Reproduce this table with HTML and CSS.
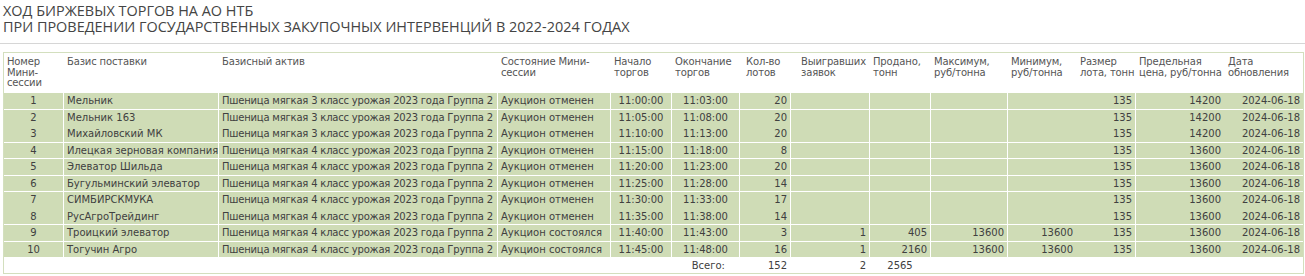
FILE: index.html
```html
<!DOCTYPE html>
<html lang="ru">
<head>
<meta charset="utf-8">
<title>Ход биржевых торгов</title>
<link rel="stylesheet" href="styles.css">
</head>
<body>
<h1 class="title">ХОД БИРЖЕВЫХ ТОРГОВ НА АО НТБ<br>ПРИ ПРОВЕДЕНИИ ГОСУДАРСТВЕННЫХ ЗАКУПОЧНЫХ ИНТЕРВЕНЦИЙ В 2022-2024 ГОДАХ</h1>
<div class="rule"></div>
<div class="panel">
<table class="grid">
<colgroup>
<col class="c1"><col class="c2"><col class="c3"><col class="c4"><col class="c5"><col class="c6"><col class="c7"><col class="c8"><col class="c9"><col class="c10"><col class="c11"><col class="c12"><col class="c13"><col class="c14">
</colgroup>
<thead>
<tr>
<th>Номер<br>Мини-<br>сессии</th>
<th>Базис поставки</th>
<th>Базисный актив</th>
<th>Состояние Мини-<br>сессии</th>
<th>Начало<br>торгов</th>
<th>Окончание<br>торгов</th>
<th class="h-lots">Кол-во<br>лотов</th>
<th class="h-win">Выигравших<br>заявок</th>
<th>Продано,<br>тонн</th>
<th>Максимум,<br>руб/тонна</th>
<th>Минимум,<br>руб/тонна</th>
<th>Размер<br>лота, тонн</th>
<th>Предельная<br>цена, руб/тонна</th>
<th>Дата<br>обновления</th>
</tr>
</thead>
<tbody>
<tr><td class="ctr">1</td><td>Мельник</td><td class="asset">Пшеница мягкая 3 класс урожая 2023 года Группа 2</td><td>Аукцион отменен</td><td class="ctr">11:00:00</td><td class="ctr">11:03:00</td><td class="num">20</td><td class="num"></td><td class="num"></td><td class="num"></td><td class="num"></td><td class="num">135</td><td class="num">14200</td><td class="num">2024-06-18</td></tr>
<tr class="join"><td class="ctr">2</td><td>Мельник 163</td><td class="asset">Пшеница мягкая 3 класс урожая 2023 года Группа 2</td><td>Аукцион отменен</td><td class="ctr">11:05:00</td><td class="ctr">11:08:00</td><td class="num">20</td><td class="num"></td><td class="num"></td><td class="num"></td><td class="num"></td><td class="num">135</td><td class="num">14200</td><td class="num">2024-06-18</td></tr>
<tr><td class="ctr">3</td><td>Михайловский МК</td><td class="asset">Пшеница мягкая 3 класс урожая 2023 года Группа 2</td><td>Аукцион отменен</td><td class="ctr">11:10:00</td><td class="ctr">11:13:00</td><td class="num">20</td><td class="num"></td><td class="num"></td><td class="num"></td><td class="num"></td><td class="num">135</td><td class="num">14200</td><td class="num">2024-06-18</td></tr>
<tr><td class="ctr">4</td><td>Илецкая зерновая компания</td><td class="asset">Пшеница мягкая 4 класс урожая 2023 года Группа 2</td><td>Аукцион отменен</td><td class="ctr">11:15:00</td><td class="ctr">11:18:00</td><td class="num">8</td><td class="num"></td><td class="num"></td><td class="num"></td><td class="num"></td><td class="num">135</td><td class="num">13600</td><td class="num">2024-06-18</td></tr>
<tr><td class="ctr">5</td><td>Элеватор Шильда</td><td class="asset">Пшеница мягкая 4 класс урожая 2023 года Группа 2</td><td>Аукцион отменен</td><td class="ctr">11:20:00</td><td class="ctr">11:23:00</td><td class="num">20</td><td class="num"></td><td class="num"></td><td class="num"></td><td class="num"></td><td class="num">135</td><td class="num">13600</td><td class="num">2024-06-18</td></tr>
<tr><td class="ctr">6</td><td>Бугульминский элеватор</td><td class="asset">Пшеница мягкая 4 класс урожая 2023 года Группа 2</td><td>Аукцион отменен</td><td class="ctr">11:25:00</td><td class="ctr">11:28:00</td><td class="num">14</td><td class="num"></td><td class="num"></td><td class="num"></td><td class="num"></td><td class="num">135</td><td class="num">13600</td><td class="num">2024-06-18</td></tr>
<tr class="join"><td class="ctr">7</td><td>СИМБИРСКМУКА</td><td class="asset">Пшеница мягкая 4 класс урожая 2023 года Группа 2</td><td>Аукцион отменен</td><td class="ctr">11:30:00</td><td class="ctr">11:33:00</td><td class="num">17</td><td class="num"></td><td class="num"></td><td class="num"></td><td class="num"></td><td class="num">135</td><td class="num">13600</td><td class="num">2024-06-18</td></tr>
<tr><td class="ctr">8</td><td>РусАгроТрейдинг</td><td class="asset">Пшеница мягкая 4 класс урожая 2023 года Группа 2</td><td>Аукцион отменен</td><td class="ctr">11:35:00</td><td class="ctr">11:38:00</td><td class="num">14</td><td class="num"></td><td class="num"></td><td class="num"></td><td class="num"></td><td class="num">135</td><td class="num">13600</td><td class="num">2024-06-18</td></tr>
<tr><td class="ctr">9</td><td>Троицкий элеватор</td><td class="asset">Пшеница мягкая 4 класс урожая 2023 года Группа 2</td><td>Аукцион состоялся</td><td class="ctr">11:40:00</td><td class="ctr">11:43:00</td><td class="num">3</td><td class="num">1</td><td class="num">405</td><td class="num">13600</td><td class="num">13600</td><td class="num">135</td><td class="num">13600</td><td class="num">2024-06-18</td></tr>
<tr><td class="ctr">10</td><td>Тогучин Агро</td><td class="asset">Пшеница мягкая 4 класс урожая 2023 года Группа 2</td><td>Аукцион состоялся</td><td class="ctr">11:45:00</td><td class="ctr">11:48:00</td><td class="num">16</td><td class="num">1</td><td class="num">2160</td><td class="num">13600</td><td class="num">13600</td><td class="num">135</td><td class="num">13600</td><td class="num">2024-06-18</td></tr>
</tbody>
<tfoot>
<tr><td></td><td></td><td></td><td></td><td></td><td class="num total-label">Всего:</td><td class="num">152</td><td class="num">2</td><td class="ctr">2565</td><td></td><td></td><td></td><td></td><td></td></tr>
</tfoot>
</table>
</div>
</body>
</html>
```
FILE: styles.css
```css
html, body {
  margin: 0;
  padding: 0;
  background: #fff;
}

.title {
  margin: 0;
  padding: 3px 3px 0;
  font-family: "Open Sans", "Liberation Sans", sans-serif;
  font-weight: normal;
  font-size: 14.45px;
  line-height: 16px;
  color: #444;
}

.rule {
  height: 1px;
  margin-top: 8px;
  background: #d6d6d6;
}

.panel {
  margin: 8px 1px 0 3px;
  border: 1px solid #d3dfbe;
}

.grid {
  table-layout: fixed;
  width: calc(100% + 2px);
  margin: -1px;
  border-collapse: separate;
  border-spacing: 1px;
  font-family: "DejaVu Sans", Verdana, sans-serif;
  font-size: 10px;
  color: #404040;
}

.c1 { width: 59px; }
.c2 { width: 154px; }
.c3 { width: 278px; }
.c4 { width: 112px; }
.c5 { width: 60px; }
.c6 { width: 67px; }
.c7 { width: 50px; }
.c8 { width: 78px; }
.c9 { width: 60px; }
.c10 { width: 76px; }
.c11 { width: 68px; }
.c12 { width: 58px; }
.c13 { width: 88px; }
.c14 { width: 78px; }

.grid th {
  height: 39px;
  padding: 4px 3px 0;
  box-sizing: border-box;
  vertical-align: top;
  text-align: left;
  font-weight: normal;
  line-height: 10.5px;
  letter-spacing: -0.15px;
  color: #555;
  background: #fff;
  white-space: nowrap;
}

.grid th.h-lots { padding-left: 6px; }
.grid th.h-win { padding-left: 10px; }

.grid tbody td {
  padding: 1px 3px;
  line-height: 13.5px;
  background: #cfdcb6;
  white-space: nowrap;
  overflow: hidden;
}

.grid tbody td.asset {
  letter-spacing: -0.2px;
}

/* cells whose right-hand separator is not drawn in the original */
.grid tbody td:nth-child(11),
.grid tbody td:nth-child(13) {
  box-shadow: 1px 0 0 #cfdcb6;
}

/* rows whose lower separator is not drawn in the original */
.grid tbody tr.join td {
  box-shadow: 0 1px 0 #cfdcb6;
}

.grid tbody tr.join td:nth-child(11),
.grid tbody tr.join td:nth-child(13) {
  box-shadow: 1px 0 0 #cfdcb6, 0 1px 0 #cfdcb6, 1px 1px 0 #cfdcb6;
}

.grid tfoot td {
  padding: 1px 3px;
  height: 13px;
  line-height: 13px;
  background: #fff;
  white-space: nowrap;
}

.grid tfoot td.total-label {
  padding-right: 14px;
}

.ctr { text-align: center; }
.num { text-align: right; }
```
